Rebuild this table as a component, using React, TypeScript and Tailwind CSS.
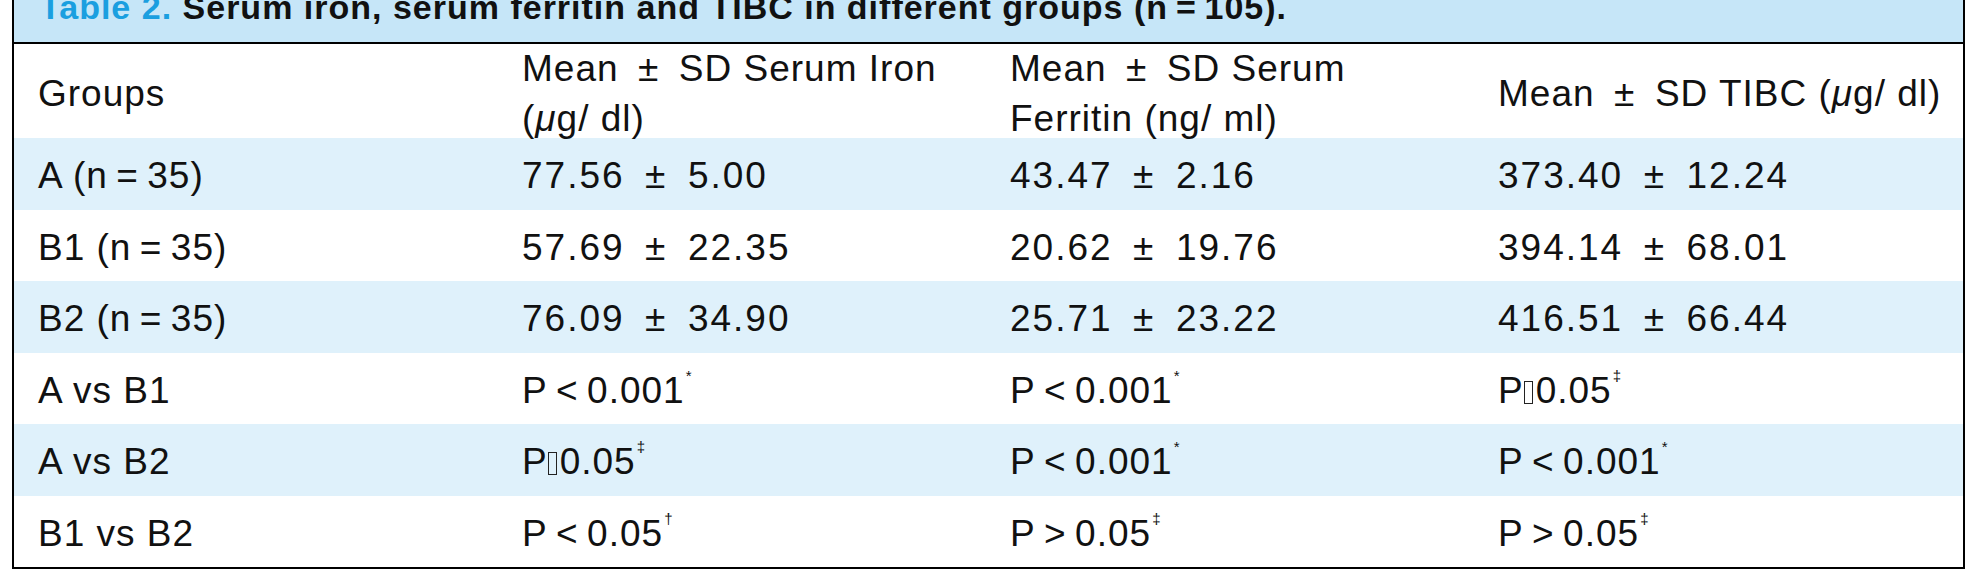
type PVal = { op: "<" | ">" | "box"; v: string; mark: string };
type Cell = string | PVal;

const font = "font-['Liberation_Sans',Arial,Helvetica,sans-serif]";

const rows: Cell[][] = [
  ["A (n\u2009=\u200935)", "77.56\u2002±\u20025.00", "43.47\u2002±\u20022.16", "373.40\u2002±\u200212.24"],
  ["B1 (n\u2009=\u200935)", "57.69\u2002±\u200222.35", "20.62\u2002±\u200219.76", "394.14\u2002±\u200268.01"],
  ["B2 (n\u2009=\u200935)", "76.09\u2002±\u200234.90", "25.71\u2002±\u200223.22", "416.51\u2002±\u200266.44"],
  [
    "A vs B1",
    { op: "<", v: "0.001", mark: "*" },
    { op: "<", v: "0.001", mark: "*" },
    { op: "box", v: "0.05", mark: "‡" },
  ],
  [
    "A vs B2",
    { op: "box", v: "0.05", mark: "‡" },
    { op: "<", v: "0.001", mark: "*" },
    { op: "<", v: "0.001", mark: "*" },
  ],
  [
    "B1 vs B2",
    { op: "<", v: "0.05", mark: "†" },
    { op: ">", v: "0.05", mark: "‡" },
    { op: ">", v: "0.05", mark: "‡" },
  ],
];

function PValue({ p }: { p: PVal }) {
  return (
    <span className="whitespace-nowrap tracking-[1px]">
      P
      {p.op === "box" ? (
        <span className="inline-block w-[9px] h-[23px] border border-[#222] align-[-1px] mr-[3px]" />
      ) : (
        <span>{"\u2009" + p.op + "\u2009"}</span>
      )}
      {p.v}
      <span className="inline-block align-top text-[15px] leading-none tracking-normal relative top-[5px] ml-[1px]">{p.mark}</span>
    </span>
  );
}

function HeadCell({ lines }: { lines: React.ReactNode[] }) {
  return (
    <div className="flex items-center pl-[24px] pb-[18px] whitespace-nowrap">
      <div className="leading-[50px]">
        {lines.map((l, i) => (
          <div key={i}>{l}</div>
        ))}
      </div>
    </div>
  );
}

const mu = <span className="italic">μ</span>;
const cols = "grid grid-cols-[484px_488px_488px_1fr]";

export default function App() {
  return (
    <div className={`min-h-[574px] bg-white pl-[12px] text-[#111] ${font}`}>
      <div className="w-[1953px] border-x-2 border-b-2 border-black">
        {/* caption band, cut off at the top of the page */}
        <div className="h-[44px] bg-[#c6e6f8] border-b-2 border-black overflow-hidden pl-[26px]">
          <div className="-mt-[10px] leading-[34px] text-[34px] font-bold tracking-[1px] whitespace-nowrap">
            <span className="text-[#1a9fe0]">Table 2.</span> Serum iron, serum ferritin and TIBC in different groups (n{"\u2009"}={"\u2009"}105).
          </div>
        </div>

        <div className="text-[37px] tracking-[1px]">
          <div className={`${cols} h-[94px] bg-white`}>
            <HeadCell lines={["Groups"]} />
            <HeadCell lines={["Mean\u2002±\u2002SD Serum Iron", <>({mu}g/ dl)</>]} />
            <HeadCell lines={["Mean\u2002±\u2002SD Serum", "Ferritin (ng/ ml)"]} />
            <HeadCell lines={[<>Mean{"\u2002"}±{"\u2002"}SD TIBC ({mu}g/ dl)</>]} />
          </div>

          {rows.map((r, i) => (
            <div key={i} className={`${cols} h-[71.5px] ${i % 2 === 0 ? "bg-[#dff1fb]" : "bg-white"}`}>
              {r.map((c, j) => (
                <div
                  key={j}
                  className={`flex items-center pl-[24px] pt-[4px] whitespace-nowrap ${j > 0 && typeof c === "string" ? "tracking-[2px]" : ""}`}
                >
                  {typeof c === "string" ? c : <PValue p={c} />}
                </div>
              ))}
            </div>
          ))}
        </div>
      </div>
    </div>
  );
}
